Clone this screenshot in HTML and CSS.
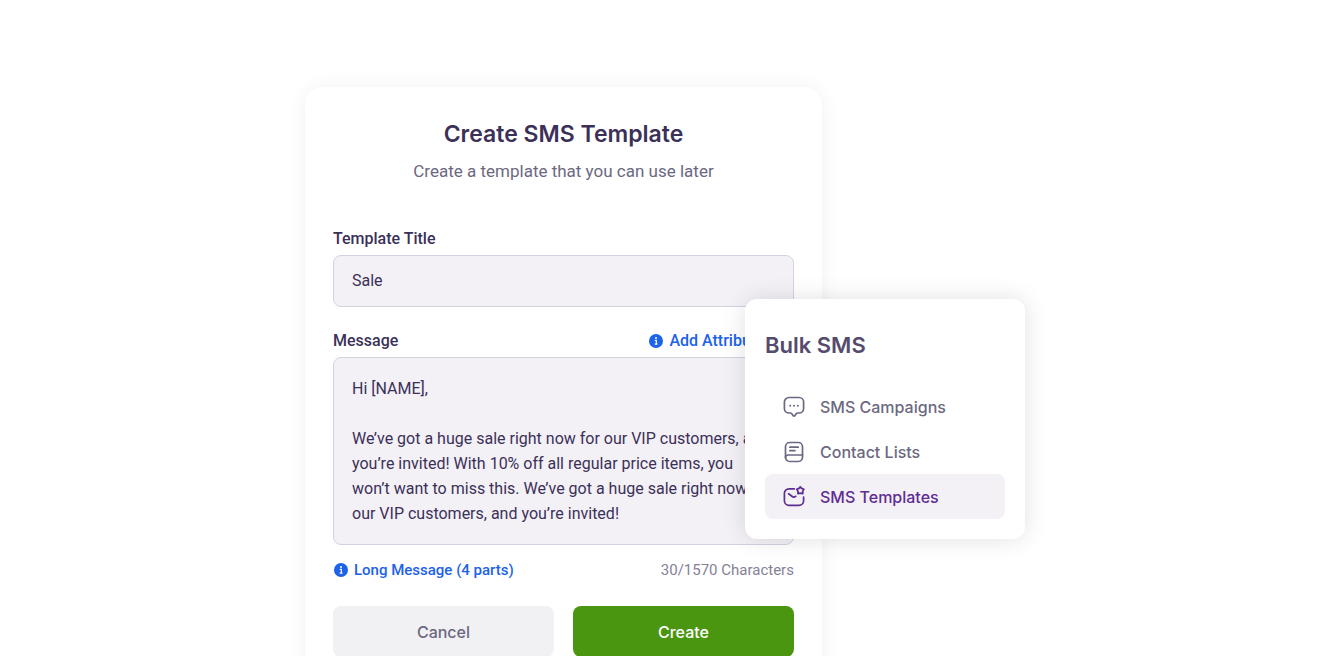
FILE: index.html
```html
<!DOCTYPE html>
<html lang="en">
<head>
<meta charset="utf-8">
<title>Create SMS Template</title>
<link rel="stylesheet" href="styles.css">
</head>
<body>
<main class="stage">
  <form class="card">
    <h1 class="card-title">Create SMS Template</h1>
    <p class="card-subtitle">Create a template that you can use later</p>

    <div class="field">
      <label class="label" for="title">Template Title</label>
      <input class="control" id="title" type="text" value="Sale">
    </div>

    <div class="field">
      <div class="row">
        <label class="label" for="message">Message</label>
        <a class="info-link attributes" href="#">
          <svg class="info-icon" viewBox="0 0 14 14" aria-hidden="true"><circle cx="7" cy="7" r="7" fill="#1c62ea"/><circle cx="7" cy="3.9" r="1" fill="#fff"/><path d="M5.8 6.3h1.5v3.9M5.7 10.2h2.8" fill="none" stroke="#fff" stroke-width="1.2"/></svg>
          Add Attributes
        </a>
      </div>
      <textarea class="control message" id="message">Hi [NAME],

We’ve got a huge sale right now for our VIP customers, and you’re invited! With 10% off all regular price items, you won’t want to miss this. We’ve got a huge sale right now for our VIP customers, and you’re invited!</textarea>
    </div>

    <div class="row meta">
      <a class="info-link long-message" href="#">
        <svg class="info-icon" viewBox="0 0 14 14" aria-hidden="true"><circle cx="7" cy="7" r="7" fill="#1c62ea"/><circle cx="7" cy="3.9" r="1" fill="#fff"/><path d="M5.8 6.3h1.5v3.9M5.7 10.2h2.8" fill="none" stroke="#fff" stroke-width="1.2"/></svg>
        Long Message (4 parts)
      </a>
      <span class="count">30/1570 Characters</span>
    </div>

    <div class="actions">
      <button class="button cancel" type="button">Cancel</button>
      <button class="button create" type="submit">Create</button>
    </div>
  </form>

  <nav class="menu" aria-labelledby="menu-title">
    <h2 class="menu-title" id="menu-title">Bulk SMS</h2>
    <a class="menu-item" href="#">
      <svg class="menu-icon" viewBox="0 0 22 22" aria-hidden="true"><path d="M6 1.500h10a4.600 4.600 0 0 1 4.600 4.600v6.300a4.600 4.600 0 0 1-4.600 4.600h-1.300a2 2 0 0 0-1.500.7l-1.400 2a1 1 0 0 1-1.600 0l-1.400-2a2 2 0 0 0-1.500-.7H6a4.600 4.600 0 0 1-4.600-4.600V6.100A4.600 4.600 0 0 1 6 1.500z"/><path class="dots" d="M7.200 9.800h.01M11 9.800h.01M14.800 9.800h.01"/></svg>
      SMS Campaigns
    </a>
    <a class="menu-item" href="#">
      <svg class="menu-icon" viewBox="0 0 22 22" aria-hidden="true"><rect x="2.500" y="1.500" width="17" height="19" rx="4.200"/><path d="M2.500 16.500c0-1.500 1-2.500 2.600-2.500h14.400M6.900 6.200h8.300M6.900 9.700h5"/></svg>
      Contact Lists
    </a>
    <a class="menu-item active" href="#" aria-current="page">
      <svg class="menu-icon" viewBox="0 0 22 22" aria-hidden="true"><path d="M11.300 2.800H6A4.600 4.600 0 0 0 1.400 7.400v7.300A4.600 4.600 0 0 0 6 19.300h10a4.600 4.600 0 0 0 4.600-4.600V11M5.600 7.800l3.300 2.500c1.200.9 2.600.9 3.800 0"/><path d="M17.300.9l1.300 1.500 2.200.9-1.100 2 .1 2.400-2.500-.5-2.400.5.1-2.400-1.200-2 2.200-.9z"/></svg>
      SMS Templates
    </a>
  </nav>
</main>
</body>
</html>
```
FILE: styles.css
```css
* {
  box-sizing: border-box;
}

body {
  margin: 0;
  background: #fff;
  color: #3b3158;
  font-family: Roboto, "Liberation Sans", sans-serif;
  font-size: 16px;
  height: 100vh;
  overflow: hidden;
}

h1, h2, p {
  margin: 0;
}

a {
  text-decoration: none;
}

.stage {
  position: relative;
  max-width: 718px;
  margin: 0 auto;
  padding-top: 87px;
}

.card {
  display: flex;
  flex-direction: column;
  width: 72%;
  padding: 28px;
  border-radius: 18px;
  background: #fff;
  box-shadow: 0 0 20px rgba(0, 0, 0, 0.06);
}

.card-title {
  font: 600 23px/38px Inter, sans-serif;
  text-align: center;
}

.card-subtitle {
  margin: 6px 0 46px;
  color: #6c6881;
  font-size: 17px;
  line-height: 24px;
  text-align: center;
}

.field {
  display: flex;
  flex-direction: column;
  gap: 6px;
  margin-bottom: 24px;
}

.row {
  display: flex;
  justify-content: space-between;
  align-items: center;
}

.label {
  font-size: 16px;
  font-weight: 500;
  line-height: 20px;
}

.control {
  width: 100%;
  height: 52px;
  padding: 0 18px 2px;
  border: 1px solid #d5d1e3;
  border-radius: 8px;
  background: #f3f0f6;
  color: #3b3158;
  font: 400 16px/25px Roboto, sans-serif;
  outline: none;
}

.message {
  display: block;
  height: 188px;
  padding: 18px 20px 16px 18px;
  resize: none;
  overflow: hidden;
}

.info-link {
  display: flex;
  align-items: center;
  gap: 6px;
  color: #1c62ea;
  font-size: 16px;
  font-weight: 500;
  line-height: 20px;
}

.attributes {
  padding-right: 21px;
}

.long-message {
  padding-left: 1px;
  font-size: 15px;
}

.info-icon {
  width: 14px;
  height: 14px;
}

.meta {
  margin: -9px 0 26px;
}

.count {
  color: #858196;
  font-size: 15px;
  line-height: 20px;
}

.actions {
  display: grid;
  grid-template-columns: 1fr 1fr;
  gap: 19px;
}

.button {
  height: 51px;
  border: 0;
  border-radius: 8px;
  font: 500 16px/24px Inter, sans-serif;
}

.cancel {
  background: #f1f0f3;
  color: #6c6881;
}

.create {
  background: #4b9610;
  color: #fff;
}

.menu {
  position: absolute;
  top: 299px;
  left: 440px;
  width: 280px;
  padding: 30px 20px 20px;
  border-radius: 12px;
  background: #fff;
  box-shadow: 0 0 24px rgba(0, 0, 0, 0.12);
}

.menu-title {
  margin-bottom: 23px;
  color: #544b6e;
  font: 600 22px/32px Inter, sans-serif;
}

.menu-item {
  display: flex;
  align-items: center;
  gap: 15px;
  height: 45px;
  padding: 0 18px;
  border-radius: 8px;
  color: #6c6881;
  font: 500 16px/24px Inter, sans-serif;
}

.menu-item.active {
  background: #f3f0f6;
  color: #5f2c91;
}

.menu-icon {
  width: 22px;
  height: 22px;
  fill: none;
  stroke: currentColor;
  stroke-width: 1.7;
  stroke-linecap: round;
  stroke-linejoin: round;
}

.dots {
  stroke-width: 2;
}
```
